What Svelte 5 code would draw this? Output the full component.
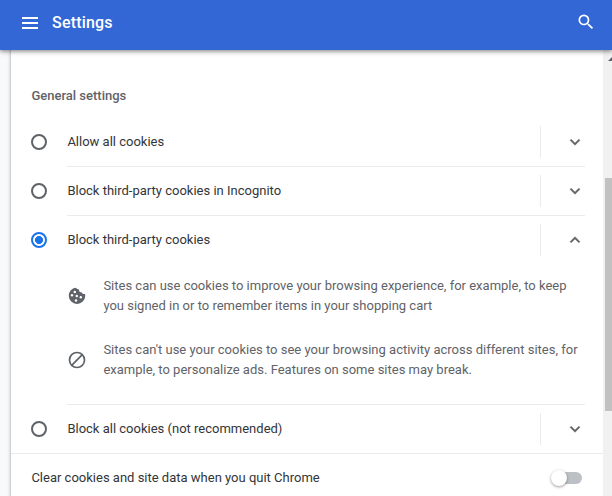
<script>
  const down = 'M7.41 8.59 12 13.17l4.59-4.58L18 10l-6 6-6-6z';
  const up = 'M12 8l-6 6 1.41 1.41L12 10.83l4.59 4.58L18 14z';
</script>

{#snippet option(label, selected)}
  <div class="option">
    <span class="radio" class:selected></span>
    <div class="option-body">
      <span class="label">{label}</span>
      <span class="expand">
        <svg viewBox="0 0 24 24" width="20" height="20"><path d={selected ? up : down} /></svg>
      </span>
    </div>
  </div>
{/snippet}

<div class="page">
  <header>
    <svg class="menu" viewBox="0 0 16 12" width="16" height="12"><path d="M0 0h16v2H0zM0 5h16v2H0zM0 10h16v2H0z" /></svg>
    <h1>Settings</h1>
    <svg class="search" viewBox="0 0 24 24" width="20" height="20"><path d="M15.5 14h-.79l-.28-.27A6.471 6.471 0 0 0 16 9.5 6.5 6.5 0 1 0 9.5 16c1.61 0 3.09-.59 4.23-1.57l.27.28v.79l5 4.99L20.49 19l-4.99-5zm-6 0C7.01 14 5 11.99 5 9.5S7.01 5 9.5 5 14 7.01 14 9.5 11.99 14 9.5 14z" /></svg>
  </header>
  <div class="content">
    <main>
      <h2>General settings</h2>
      <div class="options">
        {@render option('Allow all cookies', false)}
        <div class="line"></div>
        {@render option('Block third-party cookies in Incognito', false)}
        <div class="line"></div>
        {@render option('Block third-party cookies', true)}
        <div class="details">
          <div class="detail">
            <svg viewBox="0 0 18 18" width="18" height="18">
              <path d="M8 .7C3.9 1 .8 4.500.8 8.800a8.200 8.200 0 0 0 16.400 0c0-.7 0-1.200-.2-1.900-1.300.5-2.700-.1-3-1.500-1.900.2-3.300-1.200-2.900-3C9.600 2.200 8.600 1.700 8 .7z" />
              <g fill="#fff"><circle cx="6.800" cy="5" r="1.200" /><circle cx="4" cy="8.300" r="1.200" /><circle cx="8.800" cy="9" r="1.200" /><circle cx="12.800" cy="10.200" r="1.200" /><circle cx="8" cy="13.500" r="1.200" /></g>
            </svg>
            <p>Sites can use cookies to improve your browsing experience, for example, to keep<br />you signed in or to remember items in your shopping cart</p>
          </div>
          <div class="detail">
            <svg viewBox="0 0 18 18" width="18" height="18"><g fill="none" stroke="#5f6368" stroke-width="1.700"><circle cx="9" cy="9" r="7.500" /><path d="M3.700 14.300 14.300 3.700" /></g></svg>
            <p>Sites can't use your cookies to see your browsing activity across different sites, for<br />example, to personalize ads. Features on some sites may break.</p>
          </div>
        </div>
        <div class="line"></div>
        {@render option('Block all cookies (not recommended)', false)}
      </div>
      <div class="clear">
        <span>Clear cookies and site data when you quit Chrome</span>
        <span class="toggle"><i></i></span>
      </div>
    </main>
    <div class="scrollbar">
      <svg viewBox="0 0 4 4" width="4" height="4"><path d="M4 0 0 4h4z" /></svg>
      <div class="thumb"></div>
    </div>
  </div>
</div>

<style>
  .page { width: 612px; height: 496px; overflow: hidden; display: flex; flex-direction: column; background: #f8f9fa; font: 13px/20px Roboto, sans-serif; color: #333538; white-space: nowrap; }
  header { height: 50px; flex: none; box-sizing: border-box; padding: 0 16px 5px 22px; display: flex; align-items: center; background: #3367d6; box-shadow: 0 1px 5px rgba(0, 0, 0, .55); z-index: 1; }
  svg { display: block; flex: none; fill: #5f6368; }
  header svg { fill: #fff; }
  .search { margin-bottom: 2px; }
  h1 { margin: 0 auto 0 14px; color: #fff; font-size: 16px; font-weight: 500; letter-spacing: .2px; }
  .content { display: flex; height: 446px; }
  main { width: 592px; box-sizing: border-box; flex: none; width: 593px; margin-left: 10px; border-left: 1px solid #d0d2d4; box-shadow: -1px 0 2px rgba(60, 64, 67, .15); background: #fff; }
  h2 { margin: 0; padding: 36px 20px 12px 20.4px; font-size: 13px; line-height: 20px; font-weight: 500; color: #5f6368; }
  .options { padding: 0 18px 0 20px; }
  .option { height: 48px; display: flex; align-items: center; }
  .radio { width: 16px; height: 16px; box-sizing: border-box; border: 2px solid #5f6368; border-radius: 50%; margin-right: 20.4px; flex: none; }
  .radio.selected { border-color: #1a73e8; background: radial-gradient(circle, #1a73e8 3.700px, transparent 4.300px); }
  .option-body { flex: 1; display: flex; align-items: center; justify-content: space-between; }
  .expand { width: 45px; height: 32px; box-sizing: border-box; border-left: 1px solid #ebebeb; padding: 6px 0 0 24px; }
  .expand svg { stroke: #5f6368; stroke-width: .5; }
  .line { height: 1px; margin-left: 36px; background: #ebebeb; }
  .details { height: 140px; box-sizing: border-box; padding: 12px 0 0 37px; }
  .detail { display: flex; align-items: center; gap: 17.4px; margin-bottom: 24px; color: #5f6368; }
  p { margin: 0; }
  .clear { height: 48px; border-top: 1px solid #ebebeb; padding: 0 21px 0 20.4px; display: flex; align-items: center; justify-content: space-between; }
  .toggle { width: 28px; height: 12px; border-radius: 6px; background: #bdc1c6; display: flex; align-items: center; }
  .toggle i { width: 16px; height: 16px; margin-left: -3px; border-radius: 50%; background: #fff; box-shadow: 0 1px 3px rgba(0, 0, 0, .4); }
  .scrollbar { width: 9px; background: #f1f1f1; display: flex; flex-direction: column; align-items: flex-end; padding-top: 7px; box-sizing: border-box; }
  .thumb { width: 7px; height: 233px; margin-top: 117px; background: #c1c1c1; }
</style>
